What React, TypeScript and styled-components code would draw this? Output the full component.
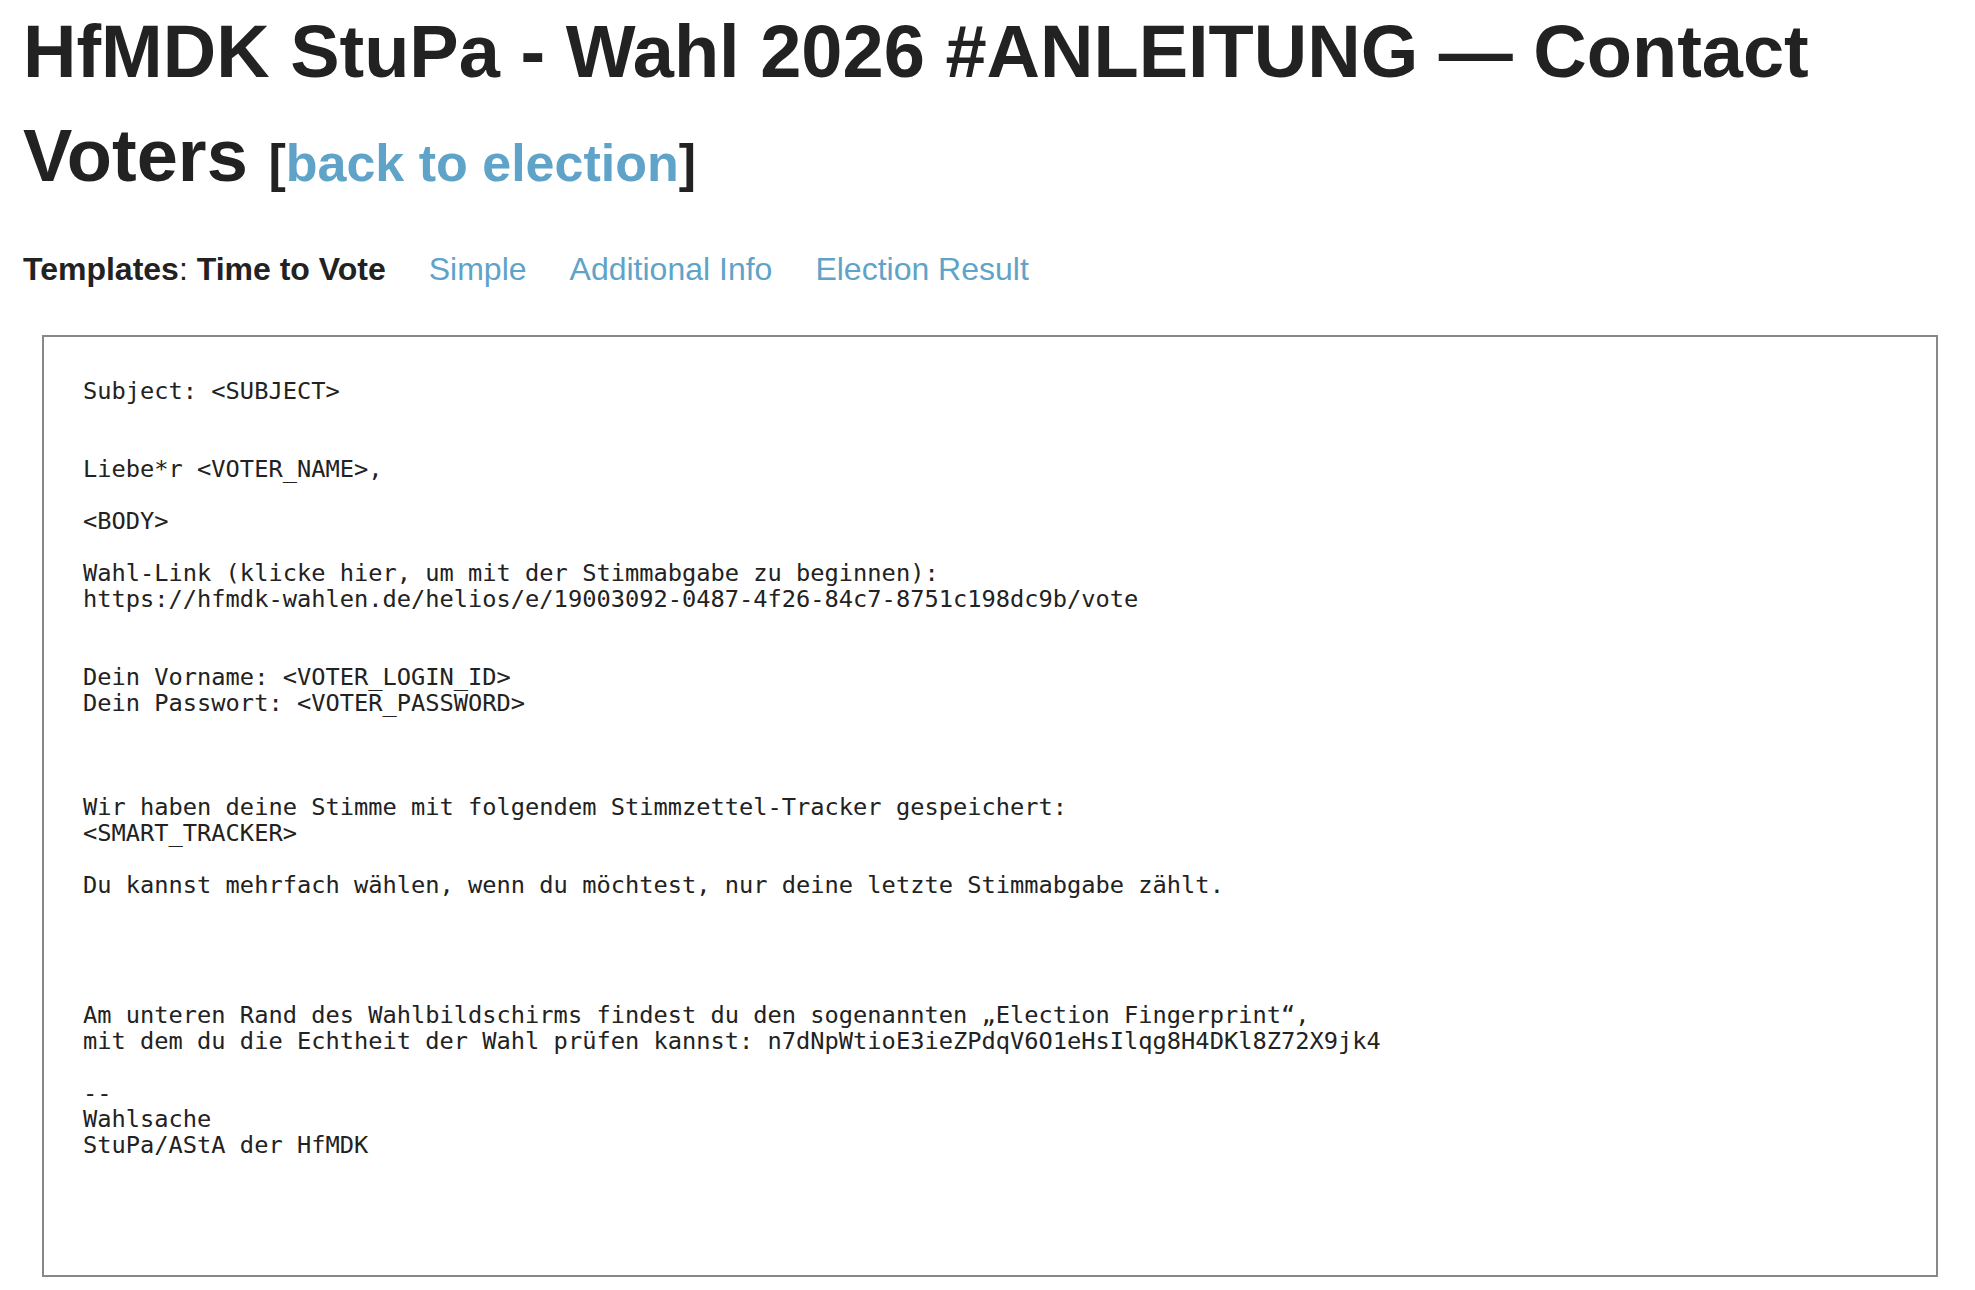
import React from "react";
import styled, { createGlobalStyle } from "styled-components";

const GlobalStyle = createGlobalStyle`
  html, body {
    margin: 0;
    padding: 0;
    background: #ffffff;
  }
  body {
    font-family: "Liberation Sans", Arial, Helvetica, sans-serif;
    color: #222222;
  }
`;

const Page = styled.div`
  padding: 0 37px 0 23px;
`;

const Title = styled.h1`
  margin: 0;
  font-family: "Liberation Sans", Arial, Helvetica, sans-serif;
  font-weight: 700;
  font-size: 74px;
  line-height: 104px;
  color: #222222;
`;

const BackLink = styled.span`
  font-size: 52px;
  font-weight: 700;
  color: #222222;
`;

const Link = styled.a<{ $bold?: boolean }>`
  color: #5fa3c8;
  text-decoration: none;
  font-weight: ${(p) => (p.$bold ? 700 : 400)};
  cursor: pointer;
`;

const TemplateBar = styled.div`
  display: flex;
  align-items: baseline;
  gap: 43px;
  margin-top: 34px;
  font-size: 32px;
  line-height: 40px;
`;

const Current = styled.span`
  color: #222222;
`;

const Strong = styled.b`
  font-weight: 700;
`;

const MailBox = styled.div`
  margin: 46px 0 0 19px;
  border: 2px solid #888888;
  padding: 41px 38px 39px 39px;
`;

const MailText = styled.pre`
  margin: 0;
  font-family: "DejaVu Sans Mono", "Liberation Mono", monospace;
  font-size: 23.7px;
  line-height: 26px;
  color: #222222;
  white-space: pre;
`;

const mail = `Subject: <SUBJECT>


Liebe*r <VOTER_NAME>,

<BODY>

Wahl-Link (klicke hier, um mit der Stimmabgabe zu beginnen):
https://hfmdk-wahlen.de/helios/e/19003092-0487-4f26-84c7-8751c198dc9b/vote


Dein Vorname: <VOTER_LOGIN_ID>
Dein Passwort: <VOTER_PASSWORD>



Wir haben deine Stimme mit folgendem Stimmzettel-Tracker gespeichert:
<SMART_TRACKER>

Du kannst mehrfach wählen, wenn du möchtest, nur deine letzte Stimmabgabe zählt.




Am unteren Rand des Wahlbildschirms findest du den sogenannten „Election Fingerprint“,
mit dem du die Echtheit der Wahl prüfen kannst: n7dNpWtioE3ieZPdqV6O1eHsIlqg8H4DKl8Z72X9jk4

--
Wahlsache
StuPa/AStA der HfMDK



`;

export default function App() {
  const templates = ["Simple", "Additional Info", "Election Result"];
  return (
    <>
      <GlobalStyle />
      <Page>
        <Title>
          HfMDK StuPa - Wahl 2026 #ANLEITUNG — Contact Voters{" "}
          <BackLink>
            [<Link $bold>back to election</Link>]
          </BackLink>
        </Title>
        <TemplateBar>
          <Current>
            <Strong>Templates</Strong>: <Strong>Time to Vote</Strong>
          </Current>
          {templates.map((t) => (
            <Link key={t}>{t}</Link>
          ))}
        </TemplateBar>
        <MailBox>
          <MailText>{mail}</MailText>
        </MailBox>
      </Page>
    </>
  );
}
